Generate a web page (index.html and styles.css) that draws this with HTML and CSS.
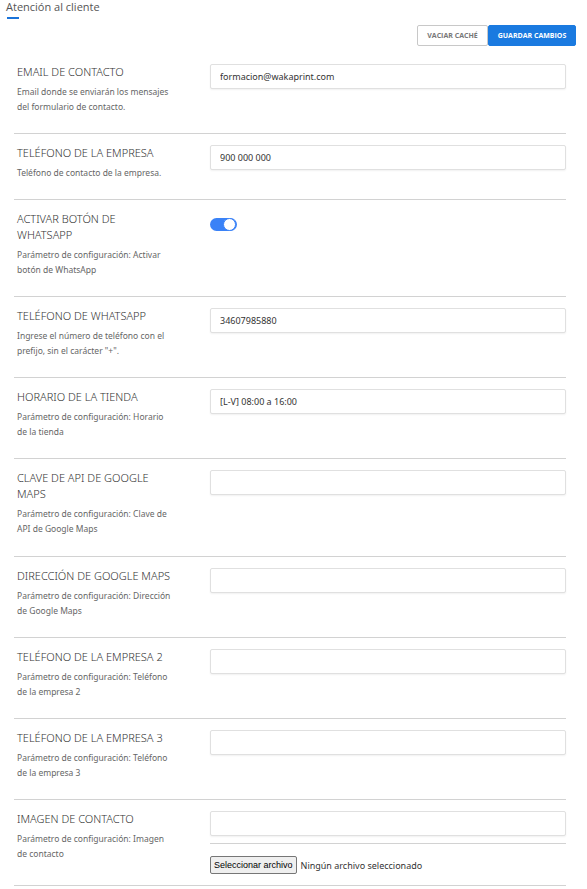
FILE: index.html
```html
<!DOCTYPE html>
<html lang="es">
<head>
    <meta charset="UTF-8">
    <meta name="viewport" content="width=device-width, initial-scale=1.0">
    <title>Atención al cliente</title>
    <link rel="stylesheet" href="styles.css">
</head>
<body>
    <div class="tabs">
        <span class="tab active">Atención al cliente</span>
    </div>

    <div class="actions">
        <button class="btn btn-light">Vaciar caché</button>
        <button class="btn btn-primary">Guardar cambios</button>
    </div>

    <div class="settings">
        <div class="row">
            <div class="info">
                <div class="label">Email de contacto</div>
                <div class="desc">Email donde se enviarán los mensajes del formulario de contacto.</div>
            </div>
            <div class="field"><input type="text" value="formacion@wakaprint.com"></div>
        </div>

        <div class="row">
            <div class="info">
                <div class="label">Teléfono de la empresa</div>
                <div class="desc">Teléfono de contacto de la empresa.</div>
            </div>
            <div class="field"><input type="text" value="900 000 000"></div>
        </div>

        <div class="row">
            <div class="info">
                <div class="label">Activar botón de WhatsApp</div>
                <div class="desc">Parámetro de configuración: Activar botón de WhatsApp</div>
            </div>
            <div class="field">
                <label class="switch"><input type="checkbox" checked><span class="slider"></span></label>
            </div>
        </div>

        <div class="row">
            <div class="info">
                <div class="label">Teléfono de WhatsApp</div>
                <div class="desc">Ingrese el número de teléfono con el prefijo, sin el carácter "+".</div>
            </div>
            <div class="field"><input type="text" value="34607985880"></div>
        </div>

        <div class="row">
            <div class="info">
                <div class="label">Horario de la tienda</div>
                <div class="desc">Parámetro de configuración: Horario de la tienda</div>
            </div>
            <div class="field"><input type="text" value="[L-V] 08:00 a 16:00"></div>
        </div>

        <div class="row">
            <div class="info">
                <div class="label">Clave de API de Google Maps</div>
                <div class="desc">Parámetro de configuración: Clave de API de Google Maps</div>
            </div>
            <div class="field"><input type="text"></div>
        </div>

        <div class="row">
            <div class="info">
                <div class="label">Dirección de Google Maps</div>
                <div class="desc">Parámetro de configuración: Dirección de Google Maps</div>
            </div>
            <div class="field"><input type="text"></div>
        </div>

        <div class="row">
            <div class="info">
                <div class="label">Teléfono de la empresa 2</div>
                <div class="desc">Parámetro de configuración: Teléfono de la empresa 2</div>
            </div>
            <div class="field"><input type="text"></div>
        </div>

        <div class="row">
            <div class="info">
                <div class="label">Teléfono de la empresa 3</div>
                <div class="desc">Parámetro de configuración: Teléfono de la empresa 3</div>
            </div>
            <div class="field"><input type="text"></div>
        </div>

        <div class="row row-file">
            <div class="info">
                <div class="label">Imagen de contacto</div>
                <div class="desc">Parámetro de configuración: Imagen de contacto</div>
            </div>
            <div class="field">
                <input type="text">
                <div class="file">
                    <button class="file-btn">Seleccionar archivo</button>
                    <span class="file-name">Ningún archivo seleccionado</span>
                </div>
            </div>
        </div>
    </div>
</body>
</html>
```

FILE: styles.css
```css
body { margin: 0; font-family: "Noto Sans", "Open Sans", sans-serif; color: #333; background: #fff; }

.tabs { padding: 0 6px; height: 20px; }
.tab { display: block; width: max-content; font-family: "Open Sans", sans-serif; font-size: 11px; color: #555; line-height: 13px; position: relative; }
.tab.active::after { content: ""; position: absolute; left: 1px; top: 17px; width: 12px; height: 2px; background: #1a73d9; }

.actions { display: flex; justify-content: flex-end; padding: 5px 11px 0 0; }
.btn { font-family: "Open Sans", sans-serif; font-size: 7px; font-weight: 700; text-transform: uppercase; height: 21px; border-radius: 2px; cursor: pointer; }
.btn-light { width: 71px; background: #fff; border: 1px solid #c8c8c8; color: #777; }
.btn-primary { width: 88px; background: #1a7ae0; border: 1px solid #1a7ae0; color: #fff; }

.settings { margin: 0 21px 0 14px; padding-top: 15.5px; }
.row { display: grid; grid-template-columns: 155px 1fr; column-gap: 38px; padding: 11px 0 19.2px 3px; border-bottom: 1px solid #d2d2d2; }
.row:first-child { padding-top: 2px; }
.label { font-size: 11px; font-weight: 300; line-height: 16px; text-transform: uppercase; color: #333; margin-bottom: 4px; }
.desc { font-size: 8.5px; line-height: 15px; color: #666; }

.field input[type=text] { display: block; box-sizing: border-box; width: 100%; height: 25px; padding: 0 9px; border: 1px solid #e0e0e0; border-radius: 2px; box-shadow: 0 1px 2px rgba(0,0,0,0.06); font-family: "Noto Sans", sans-serif; font-size: 9px; color: #333; outline: none; }

.switch { display: inline-block; position: relative; width: 27px; height: 13px; margin-top: 7px; }
.switch input { display: none; }
.slider { position: absolute; inset: 0; background: #3a82f7; border-radius: 7px; }
.slider::after { content: ""; position: absolute; right: 1px; top: 0; width: 11px; height: 11px; border-radius: 50%; background: #fff; border: 1px solid #3a82f7; }

.row-file { padding-bottom: 11px; }
.file { margin-top: 7px; padding-top: 12px; border-top: 1px solid #d2d2d2; display: flex; align-items: center; gap: 4px; }
.file-btn { font-family: "Liberation Sans", Arial, sans-serif; font-size: 9px; height: 18px; padding: 0 3px; background: #efefef; border: 1px solid #767676; border-radius: 2px; color: #000; }
.file-name { font-size: 9px; color: #333; }
```
